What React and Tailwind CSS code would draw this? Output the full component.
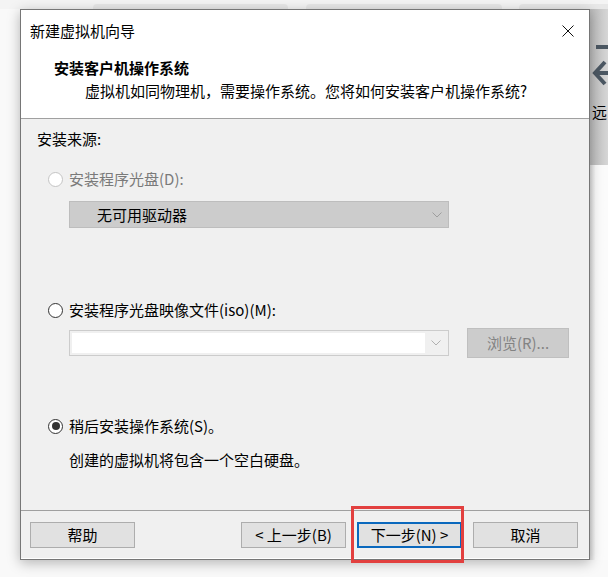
const font = { fontFamily: '"Noto Sans CJK SC", "Noto Sans", sans-serif' };

function Radio({ checked, disabled }) {
  return (
    <span
      className={`w-[15px] h-[15px] rounded-full border bg-white flex items-center justify-center shrink-0 ${
        disabled ? "border-[#c4c4c4]" : "border-[#333333]"
      }`}
    >
      {checked && <span className="w-[8px] h-[8px] rounded-full bg-[#333333]" />}
    </span>
  );
}

function Chevron({ color = "#9a9a9a" }) {
  return (
    <svg width="10" height="6" viewBox="0 0 10 6">
      <path d="M0.5 0.5 L5 5 L9.5 0.5" fill="none" stroke={color} strokeWidth="1" />
    </svg>
  );
}

function Button({ label, focused }) {
  return (
    <div
      className={`w-[105px] h-[26px] flex items-center justify-center bg-[#e1e1e1] text-[15px] leading-[20px] text-black ${
        focused ? "border-2 border-[#0a68bd]" : "border border-[#adadad]"
      }`}
    >
      {label}
    </div>
  );
}

export default function App() {
  return (
    <div className="relative w-[608px] h-[577px] bg-[#f9f9f9] overflow-hidden flex flex-col" style={font}>
      {/* background tabs */}
      <div className="h-[9px] flex items-end bg-[#f4f4f4]">
        <div className="w-[93px]" />
        <div className="w-[195px] h-[5px] rounded-t-[4px] bg-[#e8e8e8]" />
        <div className="w-[18px]" />
        <div className="w-[196px] h-[5px] rounded-t-[4px] bg-[#e8e8e8]" />
        <div className="w-[17px]" />
        <div className="flex-1 h-[5px] rounded-tl-[4px] bg-[#e8e8e8]" />
      </div>

      <div className="flex">
        <div className="w-[20px]" />

        {/* dialog */}
        <div className="w-[570px] h-[551px] border border-[#767676] bg-white flex flex-col shadow-[0_3px_12px_rgba(0,0,0,0.28)] z-10">
          <div className="h-[41px] flex items-center justify-between pl-[9px] pr-[15px]">
            <span className="text-[15px] leading-[20px] text-black">新建虚拟机向导</span>
            <svg width="12" height="12" viewBox="0 0 12 12">
              <path d="M0.5 0.5 L11.5 11.5 M11.5 0.5 L0.5 11.5" stroke="#111" strokeWidth="1" />
            </svg>
          </div>

          <div className="h-[68px] border-b border-[#a0a0a0] pt-[7px] flex flex-col">
            <div className="pl-[33px] text-[15px] leading-[20px] font-bold text-black">安装客户机操作系统</div>
            <div className="pl-[64px] mt-[3px] text-[15px] leading-[20px] text-black">
              虚拟机如同物理机，需要操作系统。您将如何安装客户机操作系统?
            </div>
          </div>

          <div className="h-[391px] bg-[#f0f0f0] flex flex-col pt-[10px] text-[15px] leading-[20px]">
            <div className="pl-[16px] text-black">安装来源:</div>

            <div className="mt-[20px] pl-[27px] flex items-center gap-[6px] text-[#7a7a7a]">
              <Radio disabled />
              <span>安装程序光盘(D):</span>
            </div>
            <div className="mt-[12px] ml-[48px] w-[380px] h-[27px] bg-[#cccccc] border border-[#bdbdbd] flex items-center justify-between pl-[27px] pr-[6px]">
              <span className="text-black">无可用驱动器</span>
              <Chevron color="#9e9e9e" />
            </div>

            <div className="mt-[72px] pl-[27px] flex items-center gap-[6px] text-black">
              <Radio />
              <span>安装程序光盘映像文件(iso)(M):</span>
            </div>
            <div className="mt-[8px] pl-[48px] h-[30px] flex items-center">
              <div className="w-[380px] h-[26px] border border-[#cccccc] bg-[#f0f0f0] flex p-[2px]">
                <div className="flex-1 bg-white" />
                <div className="w-[21px] flex items-center justify-center">
                  <Chevron color="#b0b0b0" />
                </div>
              </div>
              <div className="ml-[18px] w-[102px] h-[30px] bg-[#cccccc] border border-[#bfbfbf] flex items-center justify-center text-[#838383]">
                浏览(R)...
              </div>
            </div>

            <div className="mt-[58px] pl-[27px] flex items-center gap-[6px] text-black">
              <Radio checked />
              <span>稍后安装操作系统(S)。</span>
            </div>
            <div className="mt-[14px] pl-[48px] text-black">创建的虚拟机将包含一个空白硬盘。</div>
          </div>

          <div className="h-[1px] bg-[#a0a0a0]" />

          <div className="h-[47px] bg-[#f0f0f0] flex items-start pt-[11px] pl-[9px] pr-[11px]">
            <Button label="帮助" />
            <div className="flex-1" />
            <div className="flex gap-[11px]">
              <Button label="< 上一步(B)" />
              <Button label="下一步(N) >" focused />
              <Button label="取消" />
            </div>
          </div>
        </div>

        {/* right background strip */}
        <div className="w-[18px] flex flex-col">
          <div className="h-[156px] bg-gradient-to-r from-[#b9b9b9] to-[#d6d6d6] flex flex-col">
            <svg width="18" height="90" viewBox="0 0 18 90">
              <rect x="6" y="36" width="12" height="4" fill="#4b5762" />
              <path d="M15 53 L5 64 L15 75" fill="none" stroke="#4b5762" strokeWidth="4" />
              <rect x="6" y="62" width="12" height="4" fill="#4b5762" />
            </svg>
            <div className="pl-[2px] text-[15px] leading-[20px] text-black whitespace-nowrap overflow-hidden mt-[3px]">远</div>
          </div>
          <div className="flex-1 bg-gradient-to-r from-[#dcdcdc] to-[#fbfbfb] to-30%" />
        </div>
      </div>

      {/* red annotation box */}
      <div className="absolute left-[351px] top-[506px] w-[113px] h-[57px] border-[3px] border-[#e2403f] z-20" />
    </div>
  );
}
